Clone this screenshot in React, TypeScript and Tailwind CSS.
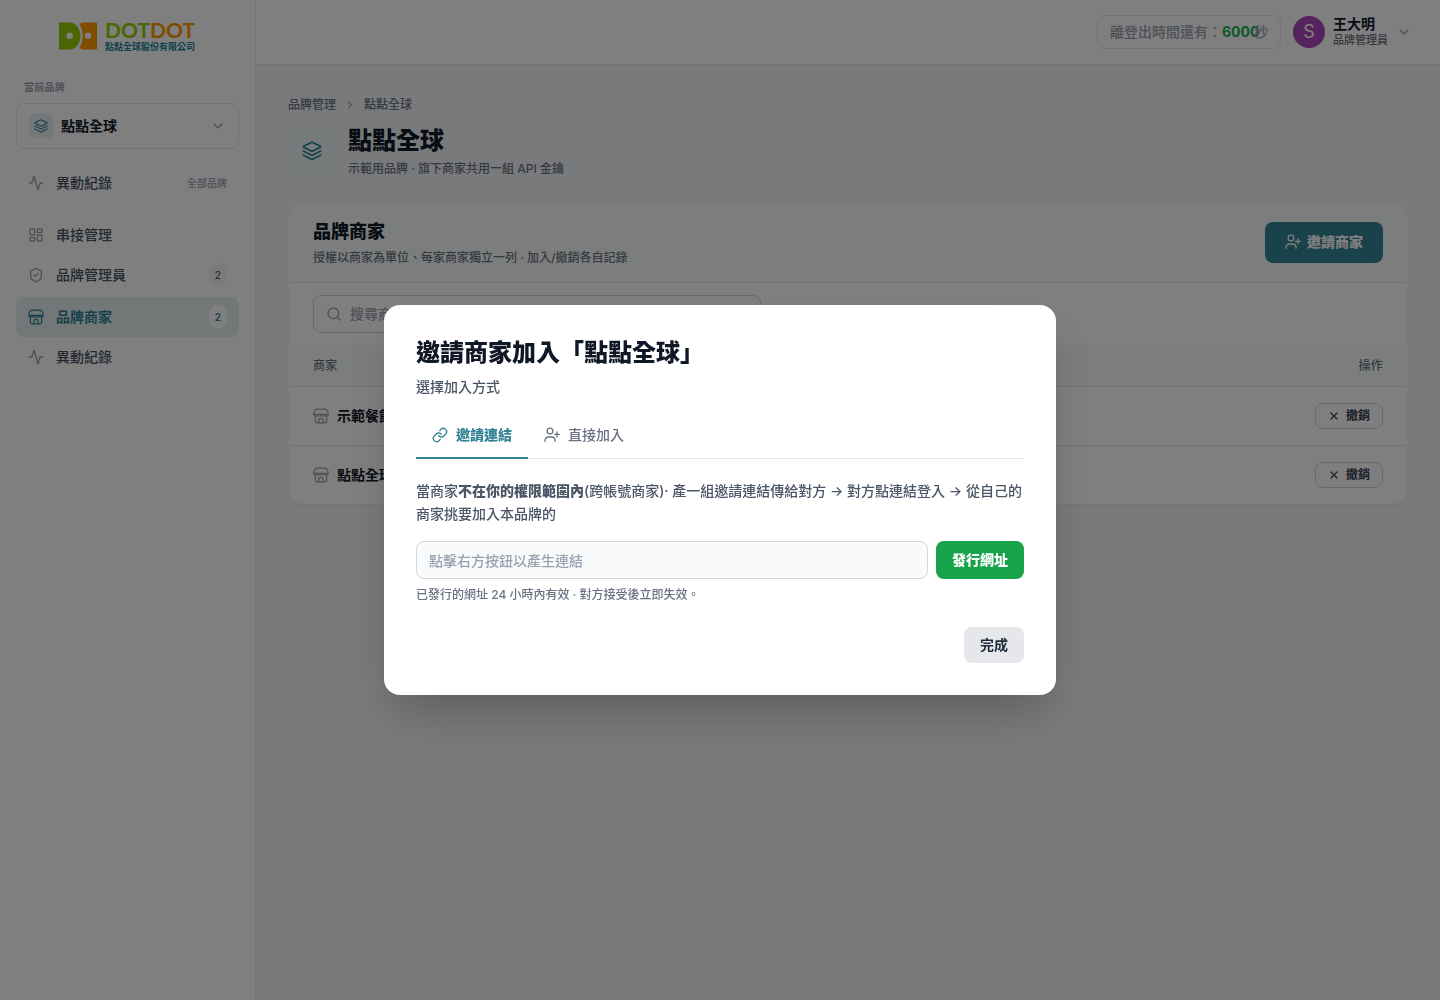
import React, { useState } from 'react';
import { Activity, ChevronDown, ChevronRight, LayoutDashboard, Link, Search, ShieldCheck, X } from 'lucide-react';

interface IconProps {
  className?: string;
}

const LayersIcon: React.FC<IconProps> = ({ className }) => (
  <svg viewBox="0 0 24 24" fill="none" stroke="currentColor" strokeWidth="2" strokeLinecap="round" strokeLinejoin="round" className={className} aria-hidden="true">
    <path d="M11 1.800a2 2 0 0 1 2 0l9 4.400a.8.8 0 0 1 0 1.400l-9 4.400a2 2 0 0 1-2 0L2 7.600a.8.8 0 0 1 0-1.400Z" />
    <path d="m1.500 12 9.500 4.700a2 2 0 0 0 2 0l9.500-4.700" />
    <path d="m1.500 17 9.500 4.700a2 2 0 0 0 2 0l9.500-4.700" />
  </svg>
);

const StoreIcon: React.FC<IconProps> = ({ className }) => (
  <svg viewBox="0 0 24 24" fill="none" stroke="currentColor" strokeWidth="1.8" strokeLinecap="round" strokeLinejoin="round" className={className} aria-hidden="true">
    <path d="M1.200 9.500C1.500 5 4 1.800 7 1.800h10c3 0 5.500 3.200 5.800 7.700Z" />
    <path d="M1.200 9.500c0 1.800 1.200 2.800 2.700 2.800s2.700-.8 2.700-1.800c0 1 1.200 1.800 2.700 1.800s2.700-.8 2.700-1.800c0 1 1.200 1.800 2.700 1.800s2.700-.8 2.700-1.800c0 1 1.200 1.800 2.700 1.800s2.700-1 2.700-2.800" />
    <path d="M3.500 12.500V20a2.300 2.300 0 0 0 2.300 2.300h12.400a2.300 2.300 0 0 0 2.300-2.300v-7.500" />
    <path d="M8.700 22.300v-3.500a3.300 3.300 0 0 1 6.600 0v3.500" />
  </svg>
);

const UserPlusIcon: React.FC<IconProps> = ({ className }) => (
  <svg viewBox="0 0 24 24" fill="none" stroke="currentColor" strokeWidth="2" strokeLinecap="round" strokeLinejoin="round" className={className} aria-hidden="true">
    <circle cx="9" cy="6" r="4.300" />
    <path d="M1.500 21.500v-1.500a5 5 0 0 1 5-5h5a5 5 0 0 1 5 5v1.500" />
    <path d="M19.500 7.500v7M16 11h7" />
  </svg>
);

const Logo: React.FC = () => (
  <a href="#" className="mx-auto flex h-8 w-[138px] items-center justify-between">
    <svg viewBox="0 0 38 28" className="h-7 w-[38px] shrink-0" aria-hidden="true">
      <path fillRule="evenodd" fill="#96cc00" d="M1 .500h9c7 0 11.500 6 11.500 13.500S17 27.500 10 27.500H1a1 1 0 0 1-1-1v-25a1 1 0 0 1 1-1ZM10.700 10.500a3.200 3.200 0 1 0 0 6.400 3.200 3.200 0 0 0 0-6.400Z" />
      <path fillRule="evenodd" fill="#ff9800" d="M37 .500H27c-3 0-5 .5-6.500 1.500 2.200 3.500 3.200 7.500 3.200 12s-1 8.500-3.200 12c1.500 1 3.500 1.500 6.500 1.500h10a1 1 0 0 0 1-1v-25a1 1 0 0 0-1-1ZM29 10.500a3.200 3.200 0 1 0 0 6.400 3.200 3.200 0 0 0 0-6.400Z" />
    </svg>
    <svg viewBox="0 0 92 32" className="h-8 w-[92px] shrink-0 overflow-visible">
      <text x="0" y="18" fontFamily="Lato" fontSize="21" fontWeight="700" fill="#96cc00">
        DOT<tspan fill="#ff9800">DOT</tspan>
      </text>
      <text x="0" y="30" fontFamily="Noto Sans CJK TC" fontSize="9" fontWeight="700" fill="#1c7f96">點點全球股份有限公司</text>
    </svg>
  </a>
);

const navItems = [
  { label: '串接管理', icon: LayoutDashboard },
  { label: '品牌管理員', icon: ShieldCheck, count: 2 },
  { label: '品牌商家', icon: StoreIcon, count: 2, active: true },
  { label: '異動紀錄', icon: Activity },
];

const Sidebar: React.FC = () => (
  <aside className="w-64 shrink-0 border-r border-gray-200 bg-white px-4 pt-5">
    <Logo />
    <p className="mt-7 px-2 text-[10px] leading-[15px] font-bold tracking-wide text-gray-400">當前品牌</p>
    <button type="button" className="mt-2 flex h-[46px] w-full items-center gap-2 rounded-lg border border-gray-200 px-3">
      <span className="flex size-6 items-center justify-center rounded bg-[#e6f2f4] text-[#2f8295]">
        <LayersIcon className="size-3.5" />
      </span>
      <span className="text-sm font-semibold text-gray-900">點點全球</span>
      <ChevronDown className="ml-auto size-4 text-gray-400" />
    </button>
    <nav className="mt-[14px] text-sm font-medium text-gray-600">
      <a href="#" className="flex h-10 items-center gap-3 rounded-lg px-3">
        <Activity className="size-4 text-gray-400" />
        異動紀錄
        <span className="ml-auto text-[10px] text-gray-400">全部品牌</span>
      </a>
      <ul className="mt-3">
        {navItems.map(({ label, icon: Icon, count, active }) => (
          <li key={label}>
            <a
              href="#"
              className={
                active
                  ? 'mt-0.5 flex h-10 items-center gap-3 rounded-lg bg-[#e4f0f1] px-3 font-semibold text-[#2f8295]'
                  : 'flex h-10 items-center gap-3 rounded-lg px-3'
              }
            >
              <Icon className={active ? 'size-4' : 'size-4 text-gray-400'} />
              {label}
              {count && (
                <span
                  className={
                    active
                      ? 'ml-auto rounded-full bg-white px-1.5 py-1 text-[10px] leading-4'
                      : 'ml-auto rounded-full bg-gray-100 px-1.5 py-1 text-[10px] leading-4'
                  }
                >
                  {count}
                </span>
              )}
            </a>
          </li>
        ))}
      </ul>
    </nav>
  </aside>
);

const Header: React.FC = () => (
  <header className="flex h-[65px] items-center justify-end gap-3 border-b border-gray-200 bg-white px-7">
    <div className="flex h-[34px] items-center rounded-lg border border-gray-200 px-3 text-sm text-gray-400">
      離登出時間還有：
      <span className="w-8 font-bold whitespace-nowrap text-[#16b354]">6000</span>
      秒
    </div>
    <button type="button" className="flex items-center gap-2 text-left">
      <span className="flex size-8 items-center justify-center rounded-full bg-[#ab47bc] text-lg font-normal text-white">S</span>
      <span className="block">
        <span className="block text-sm leading-4 font-semibold text-gray-900">王大明</span>
        <span className="block text-[11px] leading-4 text-gray-500">品牌管理員</span>
      </span>
      <ChevronDown className="size-4 text-gray-400" />
    </button>
  </header>
);

const merchants = ['示範餐飲', '點點全球'];

const MerchantCard: React.FC = () => (
  <section className="mt-6 overflow-hidden rounded-2xl border border-gray-100 bg-white shadow-xs">
    <div className="flex items-center justify-between border-b border-gray-200 bg-[#f8fcfb] px-6 py-[15px]">
      <div>
        <h2 className="text-lg leading-[30px] font-extrabold text-gray-900">品牌商家</h2>
        <p className="mt-0.5 text-xs leading-[18px] text-gray-500">授權以商家為單位、每家商家獨立一列 · 加入/撤銷各自記錄</p>
      </div>
      <button type="button" className="flex h-[41px] items-center gap-1.5 rounded-lg bg-[#358496] px-5 text-sm font-extrabold text-white">
        <UserPlusIcon className="size-4" />
        邀請商家
      </button>
    </div>
    <div className="px-6 py-3">
      <label className="flex h-[38px] w-full max-w-md items-center gap-2 rounded-lg border border-gray-300 px-3">
        <Search className="size-4 shrink-0 text-gray-400" />
        <input type="search" aria-label="搜尋商家" placeholder="搜尋商家" className="w-full text-sm outline-none placeholder:text-gray-400" />
      </label>
    </div>
    <table className="w-full text-left">
      <thead>
        <tr className="h-[41px] border-y border-t-gray-100 border-b-gray-200 bg-[#f8fcfb] text-xs tracking-wide text-gray-500">
          <th className="px-6 font-medium">商家</th>
          <th className="px-6 text-right font-medium">操作</th>
        </tr>
      </thead>
      <tbody>
        {merchants.map((name) => (
          <tr key={name} className="h-[59px] border-b border-gray-200 last:h-[58px] last:border-b-0">
            <td className="px-6">
              <span className="flex items-center gap-2 text-sm font-semibold text-gray-900">
                <StoreIcon className="size-4 text-gray-400" />
                {name}
              </span>
            </td>
            <td className="px-6">
              <button type="button" className="ml-auto flex h-[26px] items-center gap-1.5 rounded-lg border border-gray-300 px-3 text-xs font-semibold text-gray-700">
                <X className="size-3" strokeWidth={2.4} />
                撤銷
              </button>
            </td>
          </tr>
        ))}
      </tbody>
    </table>
  </section>
);

const InviteModal: React.FC = () => {
  const [tab, setTab] = useState('link');
  const activeTab = '-mb-px flex h-[46px] items-center gap-2 border-b-2 border-[#358496] px-4 text-sm font-extrabold text-[#358496]';
  const idleTab = '-mb-px flex h-[46px] items-center gap-2 border-b-2 border-transparent px-4 text-sm font-medium text-gray-500';

  return (
    <div className="fixed inset-0 flex items-center justify-center bg-black/50">
      <div role="dialog" aria-modal="true" aria-labelledby="invite-title" className="w-full max-w-2xl rounded-2xl bg-white p-8 shadow-2xl">
        <h2 id="invite-title" className="text-2xl leading-8 font-extrabold text-gray-900">邀請商家加入「點點全球」</h2>
        <p className="mt-2 text-sm leading-5 text-gray-600">選擇加入方式</p>
        <div role="tablist" className="mt-4 flex border-b border-gray-200">
          <button type="button" role="tab" aria-selected={tab === 'link'} onClick={() => setTab('link')} className={tab === 'link' ? activeTab : idleTab}>
            <Link className="size-4" />
            邀請連結
          </button>
          <button type="button" role="tab" aria-selected={tab === 'direct'} onClick={() => setTab('direct')} className={tab === 'direct' ? activeTab : idleTab}>
            <UserPlusIcon className="size-4" />
            直接加入
          </button>
        </div>
        <p className="mt-5 text-sm leading-[23px] text-gray-600">
          當商家<strong className="font-extrabold">不在你的權限範圍內</strong>(跨帳號商家)· 產一組邀請連結傳給對方 → 對方點連結登入 → 從自己的商家挑要加入本品牌的
        </p>
        <div className="mt-4 flex gap-2">
          <input type="text" readOnly aria-label="邀請連結網址" placeholder="點擊右方按鈕以產生連結" className="h-[38px] min-w-0 flex-1 rounded-lg border border-gray-300 bg-gray-50 px-3 text-sm placeholder:text-gray-400" />
          <button type="button" className="rounded-lg bg-[#16a34a] px-4 text-sm font-extrabold text-white">發行網址</button>
        </div>
        <p className="mt-2 text-xs leading-4 text-gray-500">已發行的網址 24 小時內有效 · 對方接受後立即失效。</p>
        <div className="mt-6 flex justify-end">
          <button type="button" className="h-9 rounded-lg bg-gray-200 px-4 text-sm font-semibold text-gray-800">完成</button>
        </div>
      </div>
    </div>
  );
};

const App: React.FC = () => (
  <div lang="zh-TW" className="flex min-h-screen bg-[#f3f4f6] font-['Inter','Noto_Sans_CJK_TC',sans-serif] font-medium">
    <Sidebar />
    <div className="min-w-0 flex-1">
      <Header />
      <main className="px-8 pt-8">
        <nav className="flex items-center gap-2 text-xs text-gray-500">
          <a href="#">品牌管理</a>
          <ChevronRight className="size-3" />
          <span>點點全球</span>
        </nav>
        <div className="mt-3 flex items-center gap-3">
          <span className="flex size-12 items-center justify-center rounded-xl bg-[#eef5f6] text-[#2f8295]">
            <LayersIcon className="size-5" />
          </span>
          <div>
            <h1 className="text-2xl leading-8 font-extrabold text-gray-900">點點全球</h1>
            <p className="mt-1 text-xs text-gray-500">示範用品牌 · 旗下商家共用一組 API 金鑰</p>
          </div>
        </div>
        <MerchantCard />
      </main>
    </div>
    <InviteModal />
  </div>
);

export default App;
